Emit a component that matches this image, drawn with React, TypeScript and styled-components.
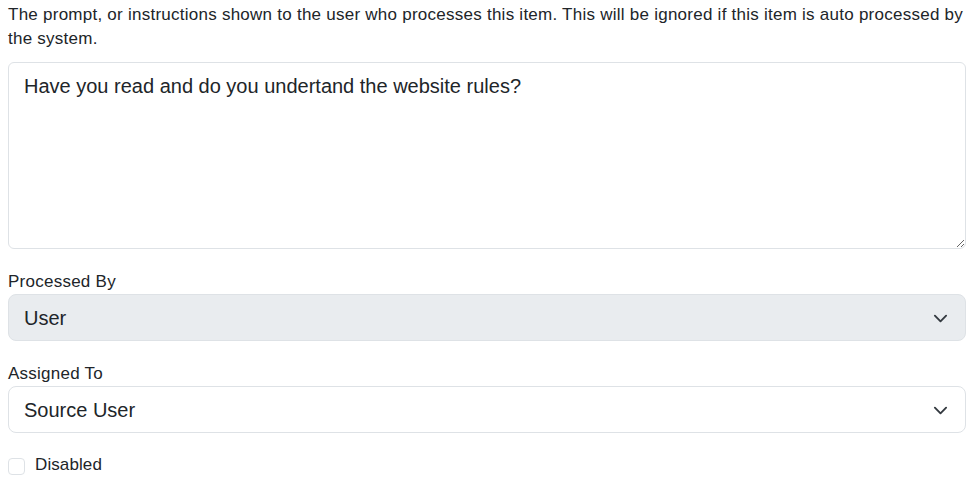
import React from "react";
import styled, { createGlobalStyle } from "styled-components";

const GlobalStyle = createGlobalStyle`
  html, body {
    margin: 0;
    padding: 0;
    background: #ffffff;
  }
  body {
    font-family: "Liberation Sans", Arial, sans-serif;
    font-size: 16px;
    line-height: 24px;
    color: #212529;
  }
  * { box-sizing: border-box; }
`;

const Page = styled.div`
  display: flex;
  flex-direction: column;
  padding: 3px 12px 0 8px;
`;

const Description = styled.p`
  margin: 0 0 11px;
  font-size: 17px;
  letter-spacing: 0.25px;
  line-height: 24px;
  color: #212529;
`;

const Group = styled.div<{ $mb?: number }>`
  display: flex;
  flex-direction: column;
  margin-bottom: ${(p) => p.$mb ?? 21}px;
`;

const Label = styled.label`
  display: block;
  font-size: 17px;
  letter-spacing: 0.25px;
  line-height: 24px;
  color: #212529;
`;

const TextArea = styled.textarea`
  display: block;
  width: 100%;
  height: 187px;
  padding: 8px 15px;
  font-family: "Liberation Sans", Arial, sans-serif;
  font-size: 20px;
  line-height: 30px;
  color: #212529;
  background: #ffffff;
  border: 1px solid #dee2e6;
  border-radius: 6px;
  resize: vertical;
  outline: none;
  margin: 0;
`;

const SelectWrap = styled.div`
  position: relative;
  width: 100%;
`;

const Select = styled.select<{ $disabledLook?: boolean }>`
  display: block;
  width: 100%;
  height: 47px;
  padding: 0 48px 0 15px;
  font-family: "Liberation Sans", Arial, sans-serif;
  font-size: 20px;
  line-height: 30px;
  color: #212529;
  background: ${(p) => (p.$disabledLook ? "#e9ecef" : "#ffffff")};
  border: 1px solid #dee2e6;
  border-radius: 8px;
  appearance: none;
  -webkit-appearance: none;
  outline: none;
  margin: 0;
  opacity: 1;
  &:disabled {
    color: #212529;
    background: #e9ecef;
  }
`;

const Chevron = styled.svg`
  position: absolute;
  right: 18px;
  top: 50%;
  width: 15px;
  height: 15px;
  margin-top: -7px;
  pointer-events: none;
`;

const CheckRow = styled.div`
  display: flex;
  align-items: center;
  gap: 10px;
  height: 24px;
`;

const CheckBox = styled.input`
  appearance: none;
  -webkit-appearance: none;
  width: 17px;
  height: 17px;
  margin: 0;
  border: 1px solid #dee2e6;
  border-radius: 4px;
  background: #ffffff;
  flex: none;
  position: relative;
  top: 1px;
`;

const CheckLabel = styled.label`
  font-size: 17px;
  letter-spacing: 0.1px;
  line-height: 24px;
  color: #212529;
`;

const ChevronIcon = () => (
  <Chevron viewBox="0 0 16 16" fill="none">
    <path
      d="m2 5 6 6 6-6"
      stroke="#343a40"
      strokeWidth="2"
      strokeLinecap="round"
      strokeLinejoin="round"
    />
  </Chevron>
);

export default function App() {
  return (
    <>
      <GlobalStyle />
      <Page>
        <Description>
          The prompt, or instructions shown to the user who processes this item. This will be
          ignored if this item is auto processed by the system.
        </Description>
        <Group>
          <TextArea defaultValue="Have you read and do you undertand the website rules?" />
        </Group>
        <Group>
          <Label htmlFor="processedBy">Processed By</Label>
          <SelectWrap>
            <Select id="processedBy" $disabledLook disabled defaultValue="user">
              <option value="user">User</option>
              <option value="system">System</option>
            </Select>
            <ChevronIcon />
          </SelectWrap>
        </Group>
        <Group $mb={20}>
          <Label htmlFor="assignedTo">Assigned To</Label>
          <SelectWrap>
            <Select id="assignedTo" defaultValue="source">
              <option value="source">Source User</option>
              <option value="other">Other User</option>
            </Select>
            <ChevronIcon />
          </SelectWrap>
        </Group>
        <CheckRow>
          <CheckBox type="checkbox" id="disabled" />
          <CheckLabel htmlFor="disabled">Disabled</CheckLabel>
        </CheckRow>
      </Page>
    </>
  );
}
